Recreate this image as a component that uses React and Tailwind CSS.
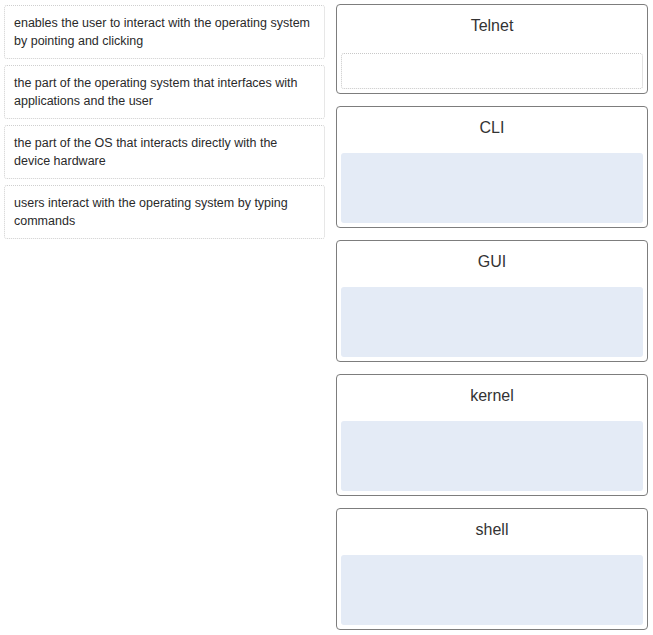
export default function App() {
  const items = [
    ["enables the user to interact with the operating system", "by pointing and clicking"],
    ["the part of the operating system that interfaces with", "applications and the user"],
    ["the part of the OS that interacts directly with the", "device hardware"],
    ["users interact with the operating system by typing", "commands"],
  ];
  const targets = [
    { t: "Telnet", blue: false },
    { t: "CLI", blue: true },
    { t: "GUI", blue: true },
    { t: "kernel", blue: true },
    { t: "shell", blue: true },
  ];
  return (
    <div className="w-[653px] h-[635px] bg-white flex" style={{ fontFamily: '"Liberation Sans", Arial, sans-serif' }}>
      <div className="w-[321px] ml-[4px] mt-[5px] flex flex-col gap-[6px]">
        {items.map((it, i) => (
          <div key={i} className="h-[54px] border border-dotted border-[#cfcfcf] rounded-[3px] pl-[9px] pt-[8px] text-[12.5px] leading-[18px] text-[#2a2a2a]">
            <div>{it[0]}</div>
            <div>{it[1]}</div>
          </div>
        ))}
      </div>
      <div className="w-[312px] ml-[11px] mt-[4px] flex flex-col gap-[12px]">
        {targets.map((tg, i) => (
          <div key={i} className="border border-[#7d7d7d] rounded-[4px] px-[4px] pb-[4px] pt-[4px]">
            <div className={`${tg.blue ? "h-[42px]" : "h-[44px]"} flex justify-center pt-[7px] text-[16px] leading-[20px] text-[#333]`}>{tg.t}</div>
            {tg.blue ? (
              <div className="h-[70px] bg-[#e4ebf6] rounded-[3px]"></div>
            ) : (
              <div className="h-[36px] border border-dotted border-[#c8c8c8] rounded-[3px]"></div>
            )}
          </div>
        ))}
      </div>
    </div>
  );
}
